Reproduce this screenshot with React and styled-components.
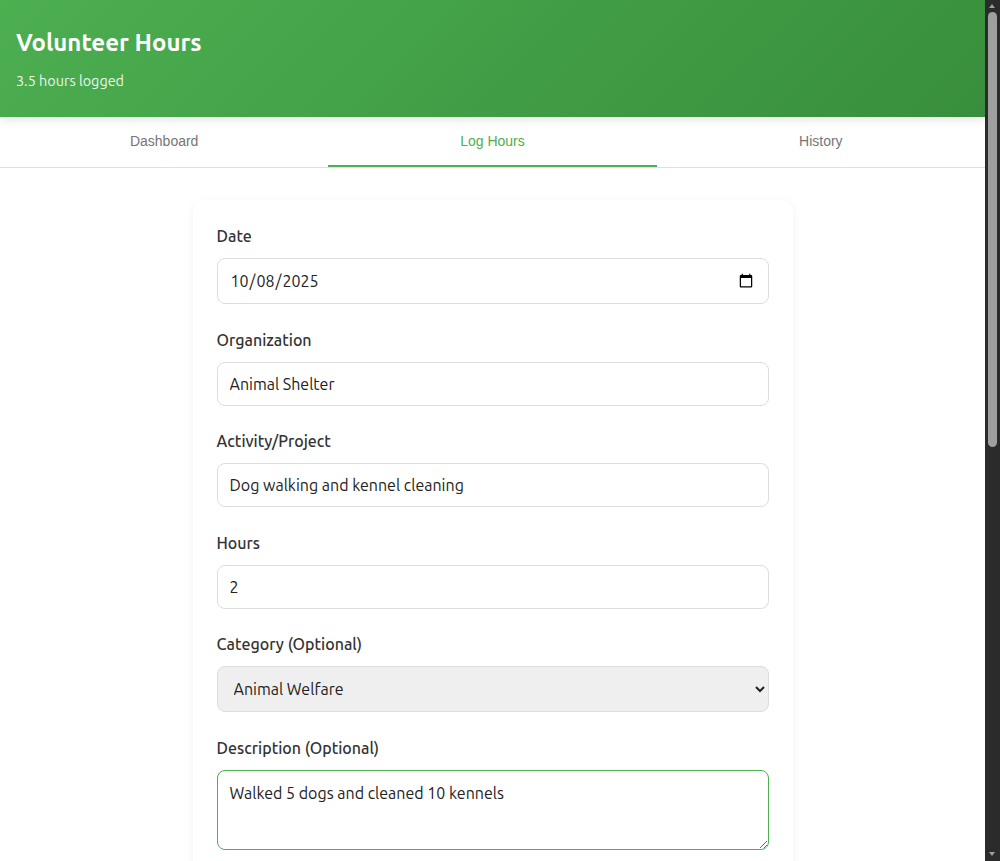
import React, { useEffect, useRef, useState } from "react";
import styled, { createGlobalStyle } from "styled-components";

const GlobalStyle = createGlobalStyle`
  * { box-sizing: border-box; }
  body {
    margin: 0;
    background: #ffffff;
    font-family: Ubuntu, "Noto Sans", "Open Sans", sans-serif;
    color: #333;
  }
`;

const Page = styled.div`
  margin-right: 15px;
`;

const ScrollRail = styled.div`
  position: fixed;
  top: 0;
  right: 0;
  width: 15px;
  height: 100vh;
  background: #2b2b2b;
  z-index: 10;
`;

const ScrollThumb = styled.div`
  position: absolute;
  top: 12px;
  left: 3px;
  width: 9px;
  height: 435px;
  border-radius: 5px;
  background: #9f9f9f;
`;

const ScrollArrow = styled.div`
  position: absolute;
  left: 4px;
  width: 0;
  height: 0;
  border-left: 3.5px solid transparent;
  border-right: 3.5px solid transparent;
  ${(p) =>
    p.$down
      ? "bottom: 5px; border-top: 4px solid #9f9f9f;"
      : "top: 4px; border-bottom: 4px solid #9f9f9f;"}
`;

const Header = styled.header`
  background: linear-gradient(135deg, #4caf50 0%, #388e3c 100%);
  color: #fff;
  padding: 25px 16px 25px;
  box-shadow: 0 2px 10px rgba(0, 0, 0, 0.12);
  position: relative;
  z-index: 1;
`;

const Title = styled.h1`
  margin: 0 0 10px;
  font-size: 24px;
  line-height: 36px;
  font-weight: 600;
`;

const Subtitle = styled.p`
  margin: 0;
  font-size: 14.4px;
  line-height: 21px;
  opacity: 0.9;
`;

const Tabs = styled.nav`
  display: grid;
  grid-template-columns: repeat(3, 1fr);
  background: #fff;
  border-bottom: 1px solid #e0e0e0;
`;

const Tab = styled.button`
  height: 50px;
  border: none;
  background: transparent;
  font-family: "Liberation Sans", Arial, sans-serif;
  font-size: 14px;
  color: ${(p) => (p.$active ? "#4caf50" : "#757575")};
  border-bottom: 2px solid ${(p) => (p.$active ? "#4caf50" : "transparent")};
  padding: 0;
  cursor: pointer;
`;

const Main = styled.main`
  padding: 32px 16px;
  display: flex;
  flex-direction: column;
  align-items: center;
  gap: 24px;
`;

const Card = styled.form`
  width: 600px;
  background: #fff;
  border-radius: 12px;
  padding: 24px;
  box-shadow: 0 2px 10px rgba(0, 0, 0, 0.06);
`;

const Group = styled.div`
  margin-bottom: 23.5px;
`;

const Label = styled.label`
  display: block;
  font-size: 16px;
  line-height: 24px;
  font-weight: 500;
  color: #333;
  margin-bottom: 10px;
`;

const fieldBase = `
  display: block;
  width: 100%;
  font-family: inherit;
  font-size: 16px;
  color: #222;
  border: 1px solid #ddd;
  border-radius: 8px;
  padding: 0 12px;
  background: #fff;
  outline: none;
  &:focus { border-color: #4caf50; }
`;

const Input = styled.input`
  ${fieldBase}
  height: ${(p) => p.$h || 44}px;
`;

const Select = styled.select`
  ${fieldBase}
  height: 46px;
  background: #efefef;
  padding: 0 12px;
`;

const TextArea = styled.textarea`
  ${fieldBase}
  height: 80px;
  padding: 12px;
  line-height: 20px;
  resize: vertical;
`;

const SubmitButton = styled.button`
  width: 100%;
  height: 48px;
  border: none;
  border-radius: 8px;
  background: #4caf50;
  color: #fff;
  font-family: inherit;
  font-size: 16px;
  font-weight: 600;
`;

const RecentCard = styled.section`
  width: 600px;
  background: #fff;
  border-radius: 12px;
  padding: 24px;
  box-shadow: 0 2px 10px rgba(0, 0, 0, 0.06);
`;

const SectionTitle = styled.h2`
  margin: 0 0 16px;
  font-size: 18px;
  font-weight: 600;
`;

const Entry = styled.div`
  display: flex;
  justify-content: space-between;
  padding: 16px 0;
  border-bottom: 1px solid #eee;
  font-size: 14px;
`;

const EntryHours = styled.span`
  color: #4caf50;
  font-weight: 600;
`;

const entries = [
  ["Animal Shelter — Dog walking", "1.5 hrs"],
  ["Food Bank — Sorting donations", "2 hrs"],
  ["Library — Reading program", "1 hr"],
  ["Park Cleanup — Trail maintenance", "3 hrs"],
  ["Community Garden — Planting", "2 hrs"],
  ["Senior Center — Companion visits", "1.5 hrs"],
  ["Animal Shelter — Kennel cleaning", "2 hrs"],
  ["Youth Club — Tutoring", "1 hr"],
  ["Beach Cleanup — Litter pickup", "2.5 hrs"],
  ["Hospital — Front desk help", "3 hrs"],
  ["Animal Shelter — Feeding", "1 hr"],
];

export default function App() {
  const [tab, setTab] = useState("log");
  const taRef = useRef(null);
  const text = "Walked 5 dogs and cleaned 10 kennels";

  useEffect(() => {
    const el = taRef.current;
    if (el) {
      el.focus({ preventScroll: true });
      el.setSelectionRange(text.length, text.length);
      window.scrollTo(0, 0);
    }
  }, []);

  return (
    <>
      <GlobalStyle />
      <Page>
        <Header>
          <Title>Volunteer Hours</Title>
          <Subtitle>3.5 hours logged</Subtitle>
        </Header>
        <Tabs>
          <Tab $active={tab === "dash"} onClick={() => setTab("dash")}>Dashboard</Tab>
          <Tab $active={tab === "log"} onClick={() => setTab("log")}>Log Hours</Tab>
          <Tab $active={tab === "hist"} onClick={() => setTab("hist")}>History</Tab>
        </Tabs>
        <Main>
          <Card onSubmit={(e) => e.preventDefault()}>
            <Group>
              <Label>Date</Label>
              <Input type="date" defaultValue="2025-10-08" $h={46} />
            </Group>
            <Group>
              <Label>Organization</Label>
              <Input type="text" defaultValue="Animal Shelter" />
            </Group>
            <Group>
              <Label>Activity/Project</Label>
              <Input type="text" defaultValue="Dog walking and kennel cleaning" />
            </Group>
            <Group>
              <Label>Hours</Label>
              <Input type="number" defaultValue="2" />
            </Group>
            <Group>
              <Label>Category (Optional)</Label>
              <Select defaultValue="Animal Welfare">
                <option>Education</option>
                <option>Animal Welfare</option>
                <option>Environment</option>
                <option>Health</option>
              </Select>
            </Group>
            <Group>
              <Label>Description (Optional)</Label>
              <TextArea ref={taRef} defaultValue={text} />
            </Group>
            <SubmitButton type="submit">Log Hours</SubmitButton>
          </Card>
          <RecentCard>
            <SectionTitle>Recent Entries</SectionTitle>
            {entries.map(([name, hrs]) => (
              <Entry key={name}>
                <span>{name}</span>
                <EntryHours>{hrs}</EntryHours>
              </Entry>
            ))}
          </RecentCard>
        </Main>
      </Page>
      <ScrollRail aria-hidden="true">
        <ScrollArrow />
        <ScrollThumb />
        <ScrollArrow $down />
      </ScrollRail>
    </>
  );
}
